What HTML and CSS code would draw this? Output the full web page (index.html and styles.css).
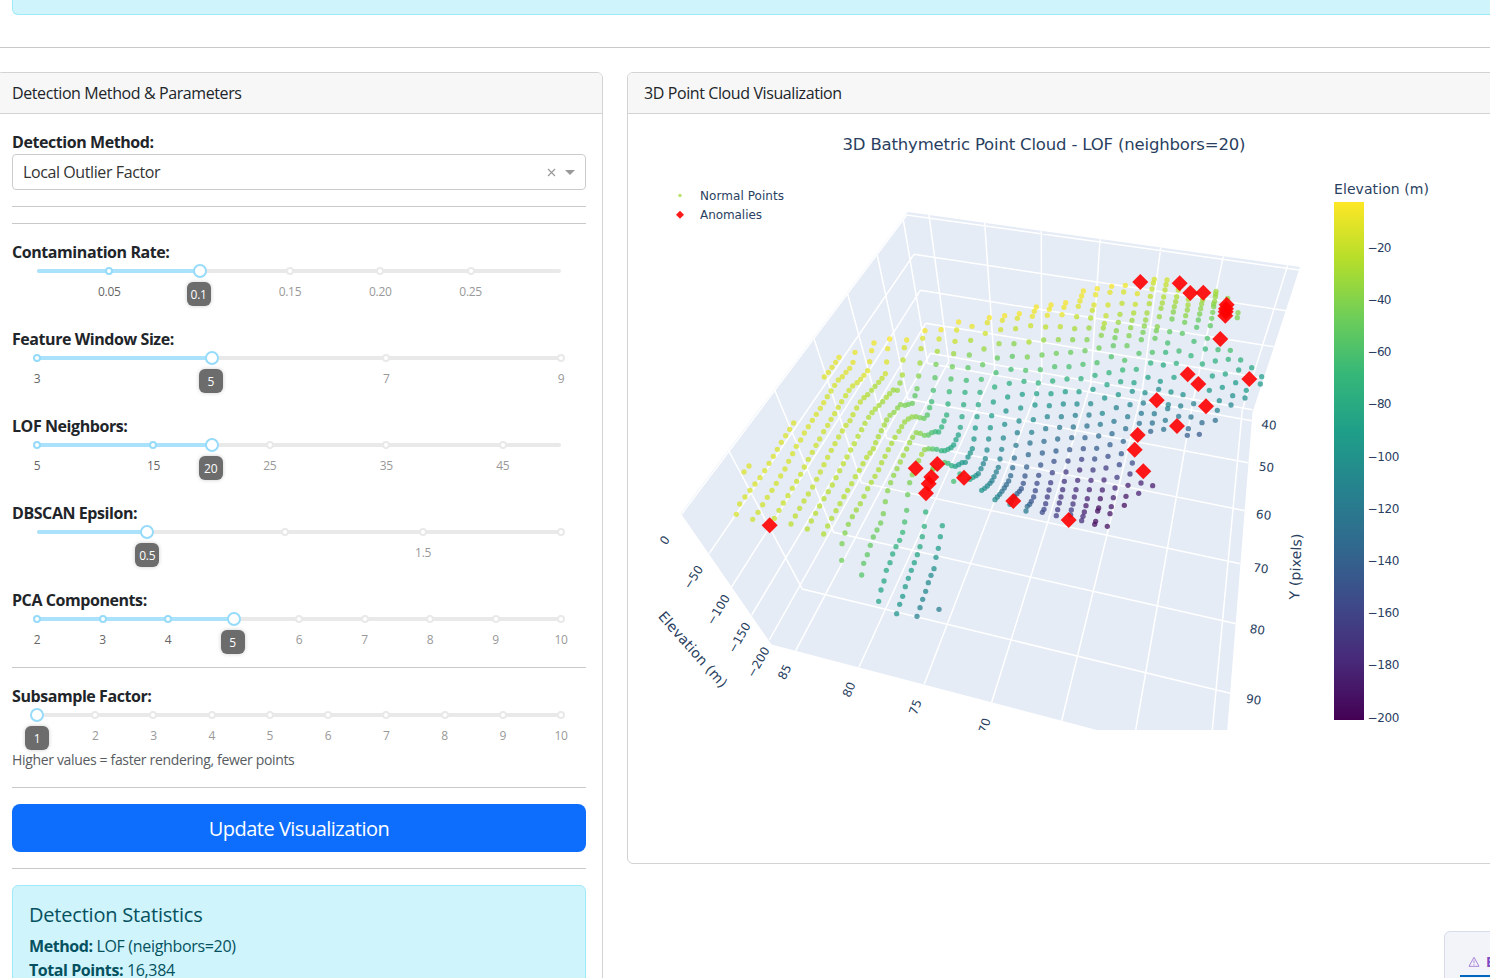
FILE: index.html
```html
<!DOCTYPE html>
<html lang="en">
<head>
<meta charset="utf-8">
<title>Bathymetric Anomaly Detection</title>
<link rel="stylesheet" href="styles.css">
</head>
<body>
<div class="page">
  <div class="top-alert"></div>
  <hr class="page-rule">
  <main class="columns">
    <section class="card params">
      <header class="card-header">Detection Method &amp; Parameters</header>
      <div class="card-body">
        <label class="label">Detection Method:</label>
        <div class="select">
          <span class="select-value">Local Outlier Factor</span>
          <svg class="select-clear" width="9" height="9" viewBox="0 0 9 9"><path d="M1 1l7 7M8 1l-7 7"/></svg>
          <svg class="select-arrow" width="10" height="5" viewBox="0 0 10 5"><path d="M0 0h10L5 5z"/></svg>
        </div>
        <hr><hr>
        <label class="label">Contamination Rate:</label>
        <div class="slider" data-min="0.01" data-max="0.3" data-value="0.1" data-shift="-1" data-marks="0.05 0.1: 0.15 0.20 0.25"></div>
        <label class="label">Feature Window Size:</label>
        <div class="slider" data-min="3" data-max="9" data-value="5" data-shift="-1" data-marks="3 5: 7 9"></div>
        <label class="label">LOF Neighbors:</label>
        <div class="slider" data-min="5" data-max="50" data-value="20" data-shift="-1" data-marks="5 15 25 35 45"></div>
        <label class="label">DBSCAN Epsilon:</label>
        <div class="slider" data-min="0.1" data-max="2" data-value="0.5" data-shift="0" data-marks="0.5: 1: 1.5 2:"></div>
        <label class="label">PCA Components:</label>
        <div class="slider last" data-min="2" data-max="10" data-value="5" data-shift="-1" data-marks="2 3 4 5: 6 7 8 9 10"></div>
        <hr>
        <label class="label">Subsample Factor:</label>
        <div class="slider flush" data-min="1" data-max="10" data-value="1" data-shift="0" data-marks="1: 2 3 4 5 6 7 8 9 10"></div>
        <small class="hint">Higher values = faster rendering, fewer points</small>
        <hr>
        <button class="update">Update Visualization</button>
        <hr>
        <div class="stats">
          <h5>Detection Statistics</h5>
          <p><b>Method:</b> LOF (neighbors=20)</p>
          <p><b>Total Points:</b> 16,384</p>
        </div>
      </div>
    </section>
    <section class="card viz">
      <header class="card-header">3D Point Cloud Visualization</header>
      <svg class="plot" width="862" height="749" viewBox="628 114 862 749">
        <defs>
          <linearGradient id="viridis" x1="0" y1="1" x2="0" y2="0">
            <stop offset="0" stop-color="#440154"/><stop offset=".1111" stop-color="#482878"/>
            <stop offset=".2222" stop-color="#3e4989"/><stop offset=".3333" stop-color="#31688e"/>
            <stop offset=".4444" stop-color="#26828e"/><stop offset=".5556" stop-color="#1f9e89"/>
            <stop offset=".6667" stop-color="#35b779"/><stop offset=".7778" stop-color="#6ece58"/>
            <stop offset=".8889" stop-color="#b5de2b"/><stop offset="1" stop-color="#fde725"/>
          </linearGradient>
          <clipPath id="scene"><rect x="628" y="180" width="700" height="550"/></clipPath>
        </defs>
        <text class="title" x="842.500" y="150" textLength="403">3D Bathymetric Point Cloud - LOF (neighbors=20)</text>
        <circle cx="680" cy="195.500" r="1.700" fill="#b9e36b"/>
        <path d="M680 210.700l4 4-4 4-4-4z" fill="#ff1a1a"/>
        <text class="tick" x="700" y="200" textLength="84">Normal Points</text>
        <text class="tick" x="700" y="219" textLength="62">Anomalies</text>
        <g clip-path="url(#scene)">
          <path class="walls" d="M907.700 212L1300 267 1252.500 412.500 1227.200 730H1097L771.500 644.500 680.700 513.300z"/>
          <path class="grid" d="M906.700 215L1299.300 270M914 254.300L1286 310.700M920.300 290.300L1273.700 346.700M925.700 323.300L1262.700 378.300M930.300 353.300L1252.500 409.700
            M906.700 215L681.700 514M914 254.300L709.300 553.300M920.300 290.300L731.700 586.700M925.700 323.300L751.700 615M930.300 353.300L769.300 640
            M903.300 220L927.700 363.300 1252 420.700M877.300 255.300L907.700 399 1248.300 462.700M847.300 292.700L886.700 438.300 1245 510.700M813.700 337.700L861.300 482.700 1240.300 563.700M774.300 389.300L833.700 532.300 1236 623.700M728.300 450L802.300 589 1230 693.300
            M929 215L948.700 361.300 795.700 650.700M984.700 223L994.700 369 859 667.300M1041.300 231.300L1041.700 378 924.300 684M1100 239.300L1090.700 384 991.700 702.300M1160.700 247.700L1142.300 390 1061.700 720.700M1223.300 256.300L1193.300 400 1135.700 730M1287.700 265.300L1242.300 410 1212.300 730"/>
          <g id="cloud"></g>
          <g class="axis">
            <text transform="translate(664.500 540) rotate(-55)" y="4.500">0</text>
            <text transform="translate(693 577) rotate(-57)" y="4.500">−50</text>
            <text transform="translate(718 609.500) rotate(-59)" y="4.500">−100</text>
            <text transform="translate(739 637.500) rotate(-60)" y="4.500">−150</text>
            <text transform="translate(758 662) rotate(-60)" y="4.500">−200</text>
            <text transform="translate(784.300 672) rotate(-62)" y="4.500">85</text>
            <text transform="translate(848.700 689.500) rotate(-66)" y="4.500">80</text>
            <text transform="translate(915 707) rotate(-70)" y="4.500">75</text>
            <text transform="translate(984.300 725.500) rotate(-72)" y="4.500">70</text>
            <text transform="translate(1269 424.500) rotate(6)" y="4.500">40</text>
            <text transform="translate(1266.500 466.700) rotate(6)" y="4.500">50</text>
            <text transform="translate(1263.700 514.500) rotate(7)" y="4.500">60</text>
            <text transform="translate(1261 568) rotate(8)" y="4.500">70</text>
            <text transform="translate(1257.500 629.400) rotate(8)" y="4.500">80</text>
            <text transform="translate(1253.700 699.200) rotate(9)" y="4.500">90</text>
          </g>
          <g class="axis name">
            <text transform="translate(693 649.500) rotate(48.500)" y="5" textLength="96">Elevation (m)</text>
            <text transform="translate(1295.500 566.500) rotate(-88)" y="5" textLength="66">Y (pixels)</text>
          </g>
        </g>
        <text class="bar-title" x="1334" y="194" textLength="95">Elevation (m)</text>
        <rect x="1334" y="202" width="30" height="518" fill="url(#viridis)"/>
        <g class="tick">
          <text x="1367.500" y="252" textLength="24">−20</text><text x="1367.500" y="304" textLength="24">−40</text>
          <text x="1367.500" y="356" textLength="24">−60</text><text x="1367.500" y="408" textLength="24">−80</text>
          <text x="1367.500" y="461" textLength="32">−100</text><text x="1367.500" y="513" textLength="32">−120</text>
          <text x="1367.500" y="565" textLength="32">−140</text><text x="1367.500" y="617" textLength="32">−160</text>
          <text x="1367.500" y="669" textLength="32">−180</text><text x="1367.500" y="722" textLength="32">−200</text>
        </g>
      </svg>
    </section>
  </main>
  <aside class="devtools">
    <div class="devtab">
      <svg width="12" height="12" viewBox="0 0 12 12"><path d="M6 1.300L11 10.300H1z"/><path d="M6 4.500v2.700M6 8.200v1"/></svg>
      <span>Errors</span>
    </div>
  </aside>
</div>
<script src="script.js"></script>
</body>
</html>
```
FILE: styles.css
```css
* { box-sizing: border-box; }
html { overflow: hidden; }
body {
  margin: 0;
  background: #fff;
  color: #212529;
  font: 16px/24px "Open Sans", "Noto Sans", sans-serif;
  letter-spacing: -0.4px;
}
.page { position: relative; width: 100%; height: 978px; overflow: hidden; }
.top-alert {
  height: 15px;
  margin: 0 -12px 0 12px;
  background: #cff4fc;
  border: 1px solid #9eeaf9;
  border-top: 0;
  border-radius: 0 0 6px 6px;
}
hr { height: 1px; margin: 16px 0; border: 0; background: #c8c9ca; }
.page-rule { margin: 32px 0 24px; }
.columns { display: flex; align-items: flex-start; gap: 24px; margin: 0 -12px 0 -4px; }
.card { border: 1px solid #d2d3d4; border-radius: 6px; background: #fff; overflow: hidden; }
.params { flex: 0 0 607px; height: 1100px; }
.viz { flex: 1; height: 792px; }
.card-header { height: 41px; padding: 8px 16px; background: #f7f7f7; border-bottom: 1px solid #d2d3d4; }
.params .card-header { padding-left: 15px; }
.card-body { padding: 16px 16px 16px 15px; }
.label { display: block; height: 24px; font-weight: 700; letter-spacing: -0.43px; }
.select {
  display: flex;
  align-items: center;
  height: 36px;
  padding: 0 10px;
  border: 1px solid #ccc;
  border-radius: 4px;
  color: #333;
}
.select-value { flex: 1; }
.select-clear { margin-right: 9px; fill: none; stroke: #999; stroke-width: 1.2; }
.select-arrow { fill: #999; }
.select + hr + hr { margin-top: 0; }
.slider { position: relative; height: 39px; margin: 0 25px 24px; font-size: 12px; line-height: 18px; letter-spacing: -0.3px; }
.slider.last, .slider.flush { margin-bottom: 0; }
.rail, .track { position: absolute; top: 5px; left: 0; height: 4px; border-radius: 3px; }
.rail { width: 100%; background: #e9e9e9; }
.track { background: #abe2fb; }
.dot { position: absolute; top: 3px; width: 8px; height: 8px; margin-left: -4px; border: 2px solid #e9e9e9; border-radius: 50%; background: #fff; }
.dot.on { border-color: #96dbfa; }
.handle { position: absolute; top: 0; width: 14px; height: 14px; margin-left: -7px; border: 2px solid #96dbfa; border-radius: 50%; background: #fff; }
.mark { position: absolute; top: 19px; transform: translateX(-50%); color: #999; }
.mark.on { color: #666; }
.tip {
  position: absolute;
  top: 18px;
  width: 24px;
  height: 24px;
  border-radius: 6px;
  background: #6c6c6c;
  box-shadow: 0 0 4px rgba(0, 0, 0, .2);
  color: #fff;
  line-height: 25px;
  text-align: center;
}
.hint { display: block; height: 24px; color: #585c5f; font-size: 14px; line-height: 26px; letter-spacing: -0.34px; }
.update {
  display: block;
  width: 100%;
  height: 48px;
  padding: 2px 0 0;
  border: 0;
  border-radius: 8px;
  background: #0d6efd;
  color: #fff;
  font: inherit;
  font-size: 20px;
  letter-spacing: -0.5px;
}
.stats { height: 200px; padding: 16px; border: 1px solid #9eeaf9; border-radius: 6px; background: #cff4fc; color: #055160; }
.stats h5 { margin: 0 0 7px; font-size: 20px; font-weight: 500; line-height: 25px; letter-spacing: -0.2px; }
.stats p { margin: 0; letter-spacing: -0.32px; }
.stats b { letter-spacing: -0.43px; }
.plot { display: block; font-family: Verdana, "DejaVu Sans", sans-serif; letter-spacing: 0; }
.plot text { fill: #2a3f5f; }
.title { font-size: 16.500px; }
.tick { font-size: 12px; }
.bar-title { font-size: 14px; }
.axis { font-size: 12px; text-anchor: middle; }
.axis.name { font-size: 14px; }
.walls { fill: #e5ecf6; }
.grid { fill: none; stroke: #fff; stroke-width: 1.500; }
.point { opacity: .74; }
.anomaly { fill: #f00; opacity: .9; }
.devtools {
  position: absolute;
  left: 1444px;
  top: 931px;
  width: 200px;
  height: 80px;
  padding: 16px 15px;
  border: 1px solid #d9dcea;
  border-radius: 6px;
  background: #f3f4fa;
}
.devtab { display: flex; align-items: center; gap: 6px; height: 29px; padding: 0 0 0 8px; border-bottom: 2px solid #0066c0; color: #7f4bc4; font-size: 14px; font-weight: 700; }
.devtab svg { fill: none; stroke: #a882d8; stroke-width: 1; }
```
FILE: script.js
```js
const NS = 'http://www.w3.org/2000/svg';

/* Sliders: "value" draws a labelled mark, "value:" draws the dot only. */
document.querySelectorAll('.slider').forEach(el => {
  const d = el.dataset, min = +d.min, span = d.max - min;
  const pct = v => (v - min) / span * 100;
  const at = pct(+d.value);
  let html = `<i class="rail"></i><i class="track" style="width:${at}%"></i>`;
  d.marks.split(' ').forEach(m => {
    const v = parseFloat(m), on = v <= +d.value ? ' on' : '';
    html += `<i class="dot${on}" style="left:${pct(v)}%"></i>`;
    if (!m.endsWith(':')) html += `<span class="mark${on}" style="left:${pct(v)}%">${m}</span>`;
  });
  html += `<i class="handle" style="left:${at}%"></i>`;
  html += `<span class="tip" style="left:calc(${at}% + ${+d.shift - 12}px)">${d.value}</span>`;
  el.innerHTML = html;
});

const stops = ['440154', '482878', '3e4989', '31688e', '26828e', '1f9e89', '35b779', '6ece58', 'b5de2b', 'fde725']
  .map(h => [0, 2, 4].map(i => parseInt(h.slice(i, i + 2), 16)));
function viridis(t) {
  const p = Math.max(0, Math.min(.9999, t)) * 9, i = Math.floor(p), f = p - i;
  return 'rgb(' + stops[i].map((c, k) => Math.round(c + (stops[i + 1][k] - c) * f)).join(',') + ')';
}

/* Projected scan lines, per tile of the scene: [origin x, origin y, lines].
   A line is "relative elevations | x,y x,y ..." with offsets in thirds of a pixel. */
const tiles = [
  [640, 170, [
    '.97 .95|597,562 587,577 576,592 565,607 553,621',
    '.97 .93|645,547 639,577 629,595 618,607 607,620 595,630 584,646 573,663 562,680',
    '.98 .95 .92|702,519 695,542 689,575 683,602 672,616 662,628 651,638 638,648 627,661 617,677',
    '1 .93 .87 .89|749,507 743,536 740,576 736,611 726,625 716,637 705,649 695,661 683,674 672,683',
    '.98 .9 .84 .85 .88|800,510 793,533 789,570 787,615 780,639 772,661 760,660 749,671 739,682',
    '.99 .93 .86 .79 .74|855,482 848,505 843,536 840,579 836,618 831,656 825,677'
  ]],
  [720, 400, [
    '.95 .95|87,198 72,216',
    '.95 .94|221,69 209,88 197,107 184,127 172,148 160,169 147,190 134,212 120,233 105,252 90,271 75,291 59,312 49,343',
    '.95 .93|311,8 301,25 289,43 277,61 265,80 253,99 242,120 229,139 218,161 206,184 195,207 182,228 169,250 156,271 142,292 128,314 114,337 98,358',
    '.93 .92|365,5 355,22 344,41 333,58 323,76 311,95 299,117 288,136 277,157 265,178 253,201 242,223 230,244 217,265 204,287 190,309 177,331 163,355',
    '.91 .92 .9|421,6 410,24 399,44 390,62 378,76 367,93 356,111 345,131 334,151 323,172 312,194 301,216 290,238 278,261 265,282 252,303 239,325 226,348 213,372',
    '.86 .9 .89|488,5 477,16 466,27 456,38 446,52 435,70 425,89 414,109 403,131 392,150 381,171 370,191 359,212 348,233 337,255 325,275 312,296 299,318 287,340 274,363 262,387',
    '.77 .85 .89 .89 .88|577,10 565,13 555,16 542,14 533,24 522,37 510,46 500,60 493,75 484,92 475,110 467,128 460,146 450,159 440,172 429,191 418,211 406,230 395,251 383,271 372,290 360,311 348,332 335,355 323,378 311,402',
    '.68 .83 .87 .88 .86 .78|635,5 629,23 622,45 612,55 600,53 588,50 576,51 565,57 554,66 545,80 537,94 525,112 515,130 505,149 495,169 485,188 476,209 465,229 454,247 443,266 432,289 421,311 409,330 397,350 385,373 375,399 366,431 365,481',
    '.64 .66 .83 .86 .82 .77 .73|684,12 680,45 672,63 665,81 656,96 646,95 635,98 625,105 613,106 601,100 589,98 578,112 569,128 560,147 550,166 541,186 531,206 521,226 512,248 503,272 496,305 490,341 482,369 471,390 460,411 451,436 442,464 431,490 425,525',
    '.84 .78 .68 .62 .6 .58|596,182 577,224 569,248 563,284 560,331 554,366 548,397 539,421 528,440 518,462 510,488 499,511 492,543 483,570 476,604',
    '.8 .8|640,205 638,208',
    '.65 .57 .52|617,336 613,379 607,410 600,440 592,464 583,488 574,511 565,535 556,560 548,589 539,613 530,641',
    '.6 .48 .44|667,377 661,410 655,445 648,472 642,506 633,526 625,548 617,574 608,598 600,623 591,649',
    '.42|657,628'
  ]],
  [920, 400, [
    '.62 .57 .65 .87|131,14 126,50 121,82 115,105 108,119 101,135 93,143 84,148 74,152 64,152 50,148 38,147 26,146 14,149 5,163',
    '.6 .53 .52 .55 .72|175,14 171,50 166,84 162,117 157,146 151,159 144,171 136,187 126,188 116,194 106,199 95,197 84,190 74,187',
    '.59 .5 .45 .5 .65|220,6 215,47 211,83 206,117 201,150 196,176 190,191 183,206 175,221 168,227 159,232 150,238 120,222',
    '.7|101,244',
    '.52 .44 .43 .51|258,33 254,73 250,114 245,148 240,177 235,202 229,216 222,230 216,242 210,250 202,258 194,265 185,271',
    '.53 .35 .34 .48|302,24 297,63 292,98 288,136 283,174 278,203 272,227 266,243 259,254 253,264 246,274 239,283 232,291 225,299',
    '.54 .37 .25 .3 .48|345,15 340,59 335,97 330,129 325,164 320,201 315,228 310,250 304,266 298,274 291,281 284,290 276,300 270,313',
    '.52 .34 .22 .25 .4|388,17 382,50 377,86 372,124 367,159 362,195 356,226 351,250 346,272 341,291 334,304 329,313 322,319 318,333',
    '.5 .35 .2 .18 .23|430,12 424,50 419,82 413,117 408,153 402,184 397,218 392,248 387,270 382,291 377,311 372,328 367,337',
    '.49 .34 .16 .14 .18|471,12 466,46 460,81 455,113 449,149 444,183 438,216 433,244 428,269 423,291 418,309 413,329 409,347',
    '.48 .32 .13 .12 .2|512,11 507,45 501,78 495,113 490,146 485,178 479,210 473,241 468,269 463,291 459,312 454,330 452,345',
    '.47 .3 .12 .07 .13|547,40 541,73 536,108 530,145 524,177 519,210 513,241 508,269 502,296 498,317 493,336 489,349 485,362',
    '.45 .31 .12 .03 .03|589,23 582,64 576,101 570,134 564,169 558,204 552,240 547,270 541,296 536,324 533,333 527,364 524,373',
    '.46 .31 .1 .03|630,14 623,50 617,86 610,124 604,161 598,194 591,232 585,264 580,293 574,320 570,341 562,379',
    '.43 .37|670,9 664,40 658,70',
    '.24 .08 .03|637,189 630,222 624,256 618,289 613,316',
    '.42 .32|703,41 697,69 692,94',
    '.1 .07|663,249 656,280 698,257'
  ]],
  [900, 200, [
    '.99 .9 .76 .7|123,389 117,417 112,454 108,493 105,533 100,571',
    '.99 .92 .78 .68|176,366 170,390 165,424 161,461 157,500 153,537 148,575',
    '.97 .82 .72 .64|216,379 212,421 208,465 204,503 199,541 195,577',
    '.99 .93 .76 .64|268,353 262,368 256,400 252,447 248,494 244,538 240,577',
    '.99 .93 .76 .64|314,347 307,361 302,389 297,431 292,474 288,518 284,561',
    '.99 .93 .77 .68 .57|358,341 352,355 347,386 342,431 337,469 333,508 328,550 323,591',
    '.99 .97 .88 .72 .56|409,321 403,334 397,349 392,377 387,426 382,471 377,511 372,544 367,583',
    '.99 .97 .84 .72 .57|453,315 448,328 442,346 437,381 431,420 426,465 421,509 415,549 410,581',
    '.99 .97 .84 .72 .57|497,308 492,322 486,344 481,380 475,419 469,460 464,500 458,543 453,581',
    '.99 .97 .87 .74 .57|550,273 545,288 540,303 535,319 530,350 524,386 518,419 512,457 507,500 501,537 496,575',
    '.99 .94 .85 .75 .57|592,266 587,284 582,315 577,331 572,354 567,384 561,419 555,452 549,493 543,536 537,575',
    '.99 .93 .86 .76 .56|635,259 630,277 624,315 618,347 613,370 610,384 604,406 597,444 591,488 585,526 579,568'
  ]],
  [1100, 240, [
    '.98 .88 .8 .71 .52|76,136 71,156 66,190 60,223 55,247 49,272 45,293 40,317 34,350 27,398 21,434 14,474',
    '.96 .86 .81 .71 .53|112,161 106,193 101,219 96,241 92,263 87,287 81,317 74,361 68,390 62,425 55,464',
    '.94 .9 .83 .75 .51|163,118 160,129 156,147 151,169 148,191 141,219 137,240 133,258 129,277 124,299 117,340 109,388 102,428 97,454',
    '.93 .88 .83 .74 .5|201,120 198,134 195,150 191,171 187,189 183,205 178,230 172,260 169,272 165,295 157,337 152,369 144,412 135,458',
    '.9 .85 .77 .65 .48|235,150 230,170 227,185 223,200 220,216 216,237 209,275 203,309 197,337 190,375 181,424 176,448',
    '.88 .82 .67 .48 .38|265,178 264,195 262,210 257,227 254,247 247,280 237,333 229,370 222,412 213,456 205,494 203,506 196,541 191,568',
    '.86 .82 .74 .66|308,180 305,192 302,206 299,222 295,240 290,262 282,304 273,347',
    '.5 .4|249,464 242,498 236,529',
    '.86 .83 .77 .63|348,154 347,162 346,170 344,184 341,192 341,200 338,217 335,235 331,257 322,295 316,327 307,372',
    '.43 .29|281,491 273,531 265,566 262,586',
    '.83|383,175',
    '.69 .54|354,329 346,363 337,408 328,451',
    '.34 .28|306,548 298,583',
    '.82 .8|414,218 412,233',
    '.7 .55 .37|391,331 385,358 376,402 367,442 358,482 352,511 346,541',
    '.64 .46|422,360 416,390 407,428 398,467 393,495',
    '.6 .5|455,383 439,451 435,474',
    '.56 .53|485,410 481,432'
  ]]
];

/* Outliers, same offset convention. */
const anomalies = [
  [1100, 240, '121,126 239,130 271,159 310,158 380,194 378,206 377,215 376,227 361,297 263,403 295,432 448,417 170,481 318,499 231,558 113,585 104,629'],
  [920, 400, '670,214 446,360 280,303 132,233 52,192'],
  [720, 400, '587,205 634,231 626,251 618,280 149,376']
];

const cloud = document.getElementById('cloud');
const parse = s => s.split(' ').map(p => p.split(',').map(Number));
function add(tag, attrs) {
  const e = document.createElementNS(NS, tag);
  for (const k in attrs) e.setAttribute(k, attrs[k]);
  cloud.appendChild(e);
}
tiles.forEach(([ox, oy, lines]) => lines.forEach(line => {
  const [levels, coords] = line.split('|');
  const ts = levels.split(' ').map(Number), pts = parse(coords);
  pts.forEach(([x, y], i) => {
    const p = pts.length > 1 ? i / (pts.length - 1) * (ts.length - 1) : 0;
    const a = Math.floor(p), b = Math.min(a + 1, ts.length - 1);
    add('circle', { class: 'point', cx: ox + x / 3, cy: oy + y / 3, r: 2.65, fill: viridis(ts[a] + (ts[b] - ts[a]) * (p - a)) });
  });
}));
anomalies.forEach(([ox, oy, s]) => parse(s).forEach(([x, y]) =>
  add('path', { class: 'anomaly', d: `M${ox + x / 3} ${oy + y / 3 - 8}l8 8-8 8-8-8z` })));
```
